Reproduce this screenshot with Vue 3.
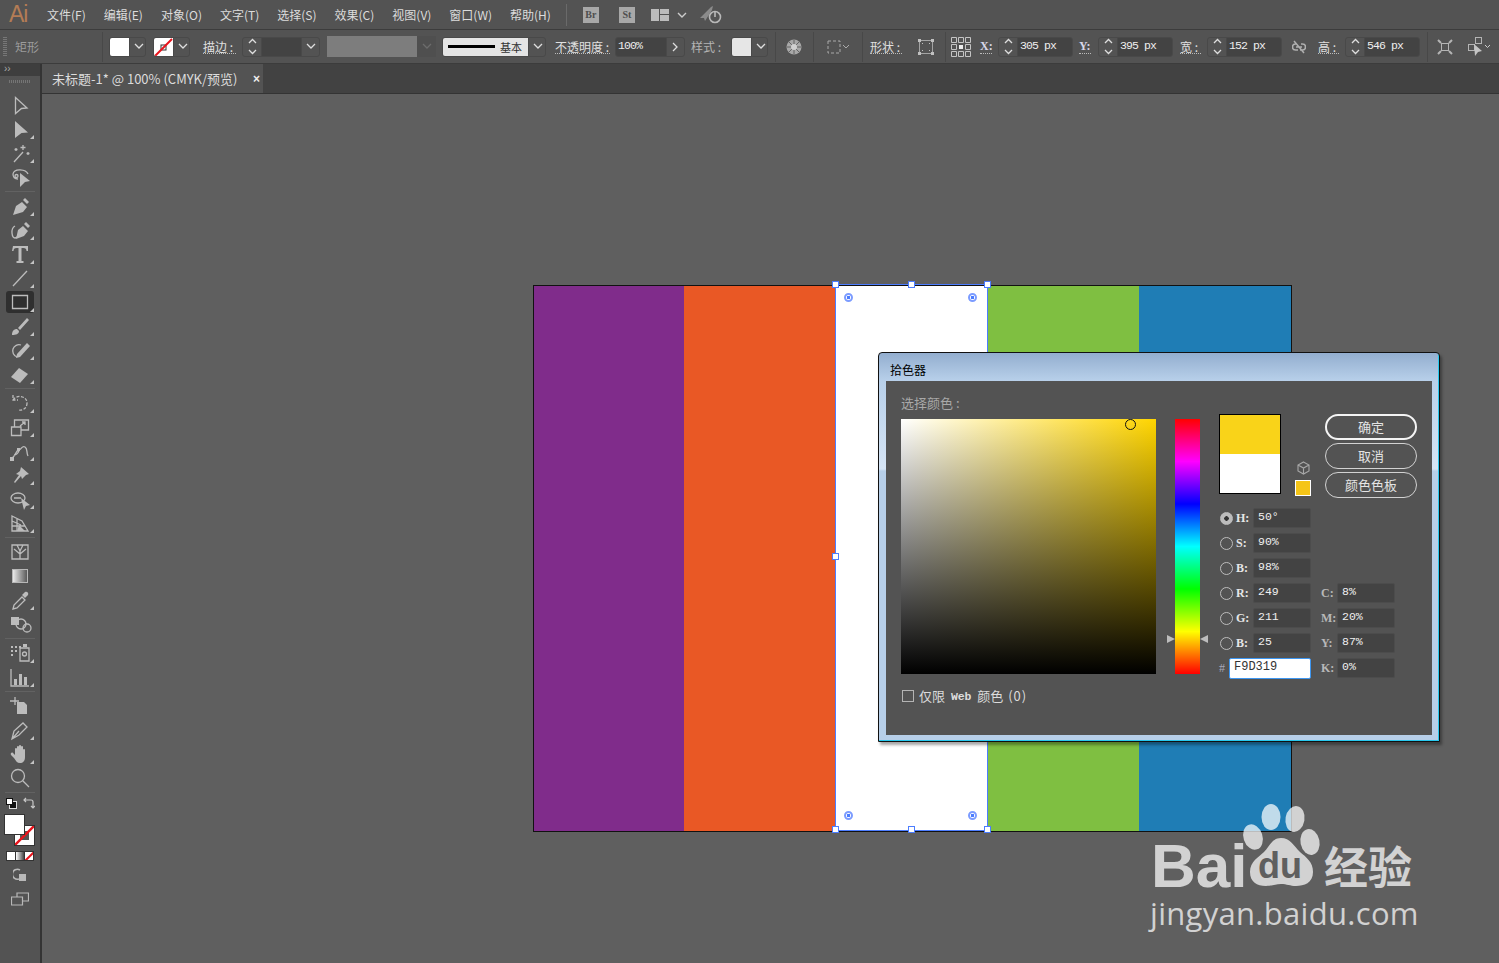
<script setup>
const menus = ['文件(F)', '编辑(E)', '对象(O)', '文字(T)', '选择(S)', '效果(C)', '视图(V)', '窗口(W)', '帮助(H)']

const pen = 'M5 21 L8 12 L14 8 L19 13 L15 18 Z M15 6 L17 4 L21 8 L19 10 Z'

// tools, one list per separated block
const toolGroups = [
  [
    { s: 'M7.5 4.5 L19 15 L13.5 15.5 L7.5 20.5 Z' },
    { f: 'M7 4 L20 15.5 L13.5 16 L7 21 Z', more: true },
    { s: 'M6 21 L15 11 M15 4v5 M12.5 6.5h5 M8 7v3 M6.5 8.5h3 M20 11v3 M18.5 12.5h3', more: true },
    { s: 'M20 9c-2-5-14-6-15 0 0 3 2 5 5 5 M7 11a1.5 1.5 0 1 0 3 0a1.5 1.5 0 1 0-3 0', f: 'M12 8 L22 16 L17 17 L12 22 Z' }
  ],
  [
    { f: pen, more: true },
    { f: 'M8 21 L10 12 L15 8 L20 13 L16 18 Z M16 6 L18 4 L22 8 L20 10 Z', s: 'M7 8c-5 3-3 12 0 12 2 0 2-2 4-2', more: true },
    { f: 'M5 4 h15 v5 h-1.5 c0-2-1-3-3-3 h-2 v13 h2 v2 h-7 v-2 h2 v-13 h-2 c-2 0-3 1-3 3 h-1.5 z', more: true },
    { s: 'M5 20 L19 5', more: true },
    { s: 'M4.5 5.5 h15 v13 h-15z', more: true, active: true },
    { f: 'M4 21 c0-4 2-6 5-6 l2 2 c0 3-3 4-7 4z M10 14 L19 4 l2 2 L12 16z', more: true },
    { s: 'M13 7a6 6 0 1 0-4 12', f: 'M9 16 L19 5 l3 3 L12 19 l-4 1z', more: true },
    { f: 'M3 15 L11 6 L20 12 L12 21 Z', more: true }
  ],
  [
    { s: 'M5 4v5h5 M5 9C9 3 19 5 19 12 M19 12c0 5-4 8-9 7', dash: true, more: true },
    { s: 'M3.5 12h9.5v8.5H3.5z M6.5 12V5h14v10h-8 M12 11 l5-4 M14 7h3v3', more: true },
    { s: 'M4 19 c4-2 3-7 7-8 3-1 3-5 6-3 3 2 1 5 3 9 M11 11c0 3-3 5-5 5', f: 'M2 18h4v4H2z M9 9h3v3H9z', more: true },
    { f: 'M13 4 L21 11 L18 12 L14 16 L13 13 L7 20 L6 19 L11 12 L8 11 L12 8z', more: true },
    { s: 'M3 11 a7 5 0 1 1 14 0 a7 5 0 1 1-14 0 M6 11h7', f: 'M13 11 L22 18 L18 19 L16 23 Z', more: true },
    { s: 'M4 5 L14 10 L20 20 H4Z M4 10 L13 14 M4 15 H17 M9 7 V20', f: 'M11 14 L17 20 H9 Z', more: true }
  ],
  [
    { s: 'M4 5h16v14H4z M12 19V11 M12 14L6 9 M12 14l6-5 M12 11 L9 5 M12 11 l3-6' },
    { grad: true },
    { s: 'M5 21 l1-4 L14 9 l3 3 L9 20z', f: 'M14 7 l3-3 c2-1 4 1 3 3 l-3 3z', more: true },
    { f: 'M3 5h8v8H3z', s: 'M8 12a5 5 0 1 0 10 0a5 5 0 1 0-10 0 M15 16a4 4 0 1 0 8 0a4 4 0 1 0-8 0' }
  ],
  [
    { f: 'M3 5h2v2H3z M7 5h2v2H7z M11 5h2v2h-2z M3 9h2v2H3z M7 9h2v2H7z M3 13h2v2H3z M15 3h4v3h-4z', s: 'M12 7h9v13h-9z M14.5 13a2 2 0 1 0 4 0a2 2 0 1 0-4 0', more: true },
    { s: 'M3 4 v17 h18', f: 'M6 14h3v6H6z M11 9h3v11h-3z M16 12h3v8h-3z', more: true }
  ],
  [
    { s: 'M7 3v8 M2 7h9', f: 'M9 8 h7 l3 3 v9 H9z' },
    { s: 'M4 21 L6 13 L15 5 L19 9 L11 17 Z M4 21 L11 13', more: true },
    { f: 'M7 13 V7 a1 1 0 0 1 2 0 V5a1 1 0 0 1 2 0 V4a1 1 0 0 1 2 0 V5 a1 1 0 0 1 2 0 V8a1 1 0 0 1 2 0V15 c0 4-2 6-5 6 c-3 0-4-2-6-5 l-3-3 c-1-2 1-3 2-2z', more: true },
    { s: 'M3.5 10a6.5 6.5 0 1 0 13 0a6.5 6.5 0 1 0-13 0 M15 15l6 6' }
  ]
]

const colorRows = [
  { lab: 'H:', val: '50°', on: true },
  { lab: 'S:', val: '90%' },
  { lab: 'B:', val: '98%' },
  { lab: 'R:', val: '249', cLab: 'C:', cVal: '8%' },
  { lab: 'G:', val: '211', cLab: 'M:', cVal: '20%' },
  { lab: 'B:', val: '25', cLab: 'Y:', cVal: '87%' },
  { hex: 'F9D319', cLab: 'K:', cVal: '0%' }
]

const stripes = [
  { c: '#802c8b', w: 150 },
  { c: '#e95825', w: 152 },
  { c: '#ffffff', w: 151 },
  { c: '#7fbf41', w: 152 },
  { c: '#1f7db5', w: 152 }
]
const handles = [[0, 0], [76, 0], [152, 0], [0, 272], [0, 545], [76, 545], [152, 545]]
const widgets = [[13, 13], [137, 13], [13, 531], [137, 531]]
</script>

<template>
  <div class="app">
    <header class="menubar">
      <span class="logo">Ai</span>
      <nav class="menus">
        <span v-for="m in menus" :key="m">{{ m }}</span>
      </nav>
      <i class="sep ml15"></i>
      <span class="badge ml16">Br</span>
      <span class="badge ml20">St</span>
      <svg class="ml16" width="18" height="14" viewBox="0 0 18 14"><path fill="#bcbcbc" d="M0 1h8v12H0z M9 1h9v5H9z M9 7h9v6H9z" /></svg>
      <svg class="ml8" width="10" height="8" viewBox="0 0 10 8"><path d="M1 2l4 4 4-4" fill="none" stroke="#ccc" stroke-width="1.4" /></svg>
      <svg class="ml12" width="24" height="20" viewBox="0 0 24 20">
        <path fill="#8b8b8b" d="M1 13 L12 2 L14 1 L13 5 L6 16 L5 13z" />
        <circle cx="16" cy="12" r="5.5" fill="none" stroke="#b8b8b8" stroke-width="1.6" />
        <path d="M16 6v6" stroke="#b8b8b8" stroke-width="1.6" />
      </svg>
    </header>

    <section class="controlbar">
      <i class="grip ml3"></i>
      <span class="kind ml8">矩形</span>
      <i class="sep2"></i>
      <div class="combo swatchbox ml6"><span class="swatch"></span><span class="drop"><svg width="10" height="7" viewBox="0 0 10 7"><path d="M1 1l4 4 4-4" /></svg></span></div>
      <div class="combo swatchbox ml7">
        <span class="swatch nofill"><svg width="19" height="19" viewBox="0 0 19 19"><rect x="7" y="7" width="5" height="5" fill="none" stroke="#333" /><path d="M1 18L18 1" stroke="#e8141c" stroke-width="2" /></svg></span>
        <span class="drop"><svg width="10" height="7" viewBox="0 0 10 7"><path d="M1 1l4 4 4-4" /></svg></span>
      </div>
      <span class="lbl w33 ml13">描边 :</span>
      <div class="combo w78 ml6">
        <span class="stepper"><svg width="9" height="17" viewBox="0 0 9 17"><path d="M1 5l3.5-3.5L8 5 M1 12l3.5 3.5L8 12" /></svg></span>
        <span class="fieldfill"></span>
        <span class="drop"><svg width="10" height="7" viewBox="0 0 10 7"><path d="M1 1l4 4 4-4" /></svg></span>
      </div>
      <div class="greybox ml7"><span class="greyfill"></span><span class="greydrop"><svg width="10" height="7" viewBox="0 0 10 7"><path d="M1 1l4 4 4-4" /></svg></span></div>
      <div class="combo w104 ml6">
        <span class="strokebox"><i class="strokeline"></i><b>基本</b></span>
        <span class="drop"><svg width="10" height="7" viewBox="0 0 10 7"><path d="M1 1l4 4 4-4" /></svg></span>
      </div>
      <span class="lbl w55 ml9">不透明度 :</span>
      <div class="combo w70 ml5">
        <span class="fieldfill val">100%</span>
        <span class="drop"><svg width="7" height="10" viewBox="0 0 7 10"><path d="M1 1l4 4-4 4" /></svg></span>
      </div>
      <span class="lbl plain w32 ml6">样式 :</span>
      <div class="combo swatchbox ml8"><span class="swatch soft"></span><span class="drop"><svg width="10" height="7" viewBox="0 0 10 7"><path d="M1 1l4 4 4-4" /></svg></span></div>
      <i class="sep2 ml7"></i>
      <svg class="ml10" width="16" height="16" viewBox="0 0 16 16">
        <circle cx="8" cy="8" r="7.5" fill="#a8a8a8" />
        <path d="M8 1v14 M1 8h14 M3 3l10 10 M13 3L3 13" stroke="#5c5c5c" stroke-width=".9" />
        <circle cx="8" cy="8" r="3" fill="#d0d0d0" />
      </svg>
      <i class="sep2 ml11"></i>
      <svg class="ml12" width="24" height="16" viewBox="0 0 24 16">
        <rect x="2" y="2" width="12" height="12" fill="none" stroke="#aaa" stroke-dasharray="3 2" />
        <path d="M17 6l3 3 3-3" fill="none" stroke="#aaa" />
      </svg>
      <i class="sep2 ml12"></i>
      <span class="lbl w32 ml7">形状 :</span>
      <svg class="ml16" width="16" height="16" viewBox="0 0 16 16">
        <rect x="1.500" y="1.500" width="13" height="13" fill="none" stroke="#a4a4a4" />
        <path fill="#c0c0c0" d="M0 0h3v3H0z M13 0h3v3h-3z M0 13h3v3H0z M13 13h3v3h-3z M4 4h1v1H4z M11 4h1v1h-1z M4 11h1v1H4z M11 11h1v1h-1z" />
      </svg>
      <i class="sep2 ml11"></i>
      <svg class="ml5" width="20" height="20" viewBox="0 0 20 20" fill="none" stroke="#c4c4c4">
        <path d="M.5.5h5v5h-5z M7.5.5h5v5h-5z M14.5.5h5v5h-5z M.5 7.5h5v5h-5z M14.5 7.5h5v5h-5z M.5 14.5h5v5h-5z M7.5 14.5h5v5h-5z M14.5 14.5h5v5h-5z" />
        <path d="M8 8h4v4H8z" fill="#eee" stroke="none" />
      </svg>
      <span class="lbl serif w12 ml9">X:</span>
      <div class="combo w75 ml6">
        <span class="stepper"><svg width="9" height="17" viewBox="0 0 9 17"><path d="M1 5l3.5-3.5L8 5 M1 12l3.5 3.5L8 12" /></svg></span>
        <span class="fieldfill mono">305 px</span>
      </div>
      <span class="lbl serif w12 ml6">Y:</span>
      <div class="combo w75 ml7">
        <span class="stepper"><svg width="9" height="17" viewBox="0 0 9 17"><path d="M1 5l3.5-3.5L8 5 M1 12l3.5 3.5L8 12" /></svg></span>
        <span class="fieldfill mono">395 px</span>
      </div>
      <span class="lbl w21 ml7">宽 :</span>
      <div class="combo w75 ml6">
        <span class="stepper"><svg width="9" height="17" viewBox="0 0 9 17"><path d="M1 5l3.5-3.5L8 5 M1 12l3.5 3.5L8 12" /></svg></span>
        <span class="fieldfill mono">152 px</span>
      </div>
      <svg class="ml10" width="14" height="14" viewBox="0 0 14 14" fill="none" stroke="#b0b0b0" stroke-width="1.5">
        <path d="M5 4H3.500a3 3 0 0 0 0 6H6 M9 4h1.500a3 3 0 0 1 0 6H8 M4 7h6 M2 1l10 12" />
      </svg>
      <span class="lbl w21 ml12">高 :</span>
      <div class="combo w75 ml6">
        <span class="stepper"><svg width="9" height="17" viewBox="0 0 9 17"><path d="M1 5l3.5-3.5L8 5 M1 12l3.5 3.5L8 12" /></svg></span>
        <span class="fieldfill mono">546 px</span>
      </div>
      <i class="sep2 ml7"></i>
      <svg class="ml9" width="16" height="20" viewBox="0 0 16 20" fill="none" stroke="#b4b4b4">
        <rect x="4.500" y="6.500" width="7" height="7" />
        <path d="M1 3l3 3 M15 3l-3 3 M1 17l3-3 M15 17l-3-3" stroke-width="2" />
      </svg>
      <svg class="ml15" width="22" height="20" viewBox="0 0 22 20">
        <rect x=".5" y="7.500" width="6" height="6" fill="none" stroke="#b4b4b4" />
        <rect x="7.500" y=".5" width="6" height="6" fill="none" stroke="#b4b4b4" />
        <path d="M6 7 L14 14 L10 15 L7 19 Z" fill="#c4c4c4" />
        <path d="M17 8l2.500 2.500L22 8" fill="none" stroke="#ccc" />
      </svg>
    </section>

    <div class="body">
      <aside class="toolbar">
        <div class="panelhead">››</div>
        <i class="toolgrip"></i>
        <div class="toolgroups">
          <div v-for="(group, g) in toolGroups" :key="g" class="toolgroup">
            <div v-for="(t, i) in group" :key="i" class="tool" :class="{ active: t.active }">
              <svg width="24" height="24" viewBox="0 0 24 24">
                <defs v-if="t.grad">
                  <linearGradient id="toolgrad"><stop offset="0" stop-color="#eee" /><stop offset="1" stop-color="#555" /></linearGradient>
                </defs>
                <rect v-if="t.grad" x="4.500" y="5.500" width="15" height="13" fill="url(#toolgrad)" stroke="#b8b8b8" />
                <path v-if="t.f" :d="t.f" fill="#bcbcbc" />
                <path v-if="t.s" :d="t.s" fill="none" stroke="#bcbcbc" stroke-width="1.300" :stroke-dasharray="t.dash ? '3 1.500' : null" />
              </svg>
              <i v-if="t.more" class="more"></i>
            </div>
          </div>
        </div>

        <div class="defaults">
          <span class="mini"><i class="mini-back"></i><i class="mini-front"></i></span>
          <svg width="12" height="12" viewBox="0 0 12 12" fill="none" stroke="#c8c8c8" stroke-width="1.200">
            <path d="M1 3h7a2 2 0 0 1 2 2v6 M3 1L1 3l2 2 M8 9l2 2 2-2" />
          </svg>
        </div>
        <div class="fillstroke">
          <span class="strokewell">
            <svg width="19" height="19" viewBox="0 0 19 19"><rect x="5" y="5" width="9" height="9" fill="#555" /><path d="M0 19L19 0" stroke="#e8141c" stroke-width="2.400" /></svg>
          </span>
          <span class="fillwell"></span>
        </div>
        <div class="modes">
          <i class="mode m-white"></i><i class="mode m-grad"></i>
          <i class="mode m-none"><svg width="9" height="9" viewBox="0 0 9 9"><path d="M0 9L9 0" stroke="#e8141c" stroke-width="2" /></svg></i>
        </div>
        <svg class="drawmode" width="14" height="14" viewBox="0 0 14 14">
          <path d="M7 2a5 5 0 1 0-1 9" fill="none" stroke="#b8b8b8" stroke-width="1.500" />
          <rect x="6" y="6" width="7" height="7" fill="#b8b8b8" />
        </svg>
        <svg class="screenmode" width="18" height="14" viewBox="0 0 18 14" fill="none" stroke="#b8b8b8" stroke-width="1.200">
          <path d="M.5 5h11v8H.5z M6 5V1h11.500v8h-6" />
        </svg>
      </aside>

      <main class="main">
        <div class="tabbar">
          <div class="tab"><span>未标题-1* @ 100% (CMYK/预览)</span><b>×</b></div>
        </div>
        <div class="workspace">
          <div class="artboard">
            <div v-for="s in stripes" :key="s.c" :style="{ background: s.c, width: s.w + 'px' }"></div>
          </div>
          <div class="selection">
            <i v-for="(h, i) in handles" :key="'h' + i" class="handle" :style="{ left: h[0] + 'px', top: h[1] + 'px' }"></i>
            <i v-for="(w, i) in widgets" :key="'w' + i" class="widget" :style="{ left: w[0] + 'px', top: w[1] + 'px' }"></i>
          </div>

          <div class="dialog">
            <div class="dialog-title">拾色器</div>
            <div class="dialog-body">
              <div class="col-sv">
                <div class="pick-label">选择颜色 :</div>
                <div class="sv"><i class="sv-cursor"></i></div>
                <label class="webonly"><i class="checkbox"></i><span>仅限</span><b>Web</b><span>颜色</span><span class="count">(0)</span></label>
              </div>
              <div class="hue"><i class="hue-l"></i><i class="hue-r"></i></div>
              <div class="col-right">
                <div class="top-row">
                  <div class="preview"><i class="pv-new"></i><i class="pv-old"></i></div>
                  <div class="gamut">
                    <svg width="13" height="14" viewBox="0 0 13 14" fill="none" stroke="#a8a8a8" stroke-width="1.100">
                      <path d="M6.500 1L12 4v6l-5.500 3L1 10V4z M1 4l5.500 3L12 4 M6.500 7v6" />
                    </svg>
                    <i class="gamut-swatch"></i>
                  </div>
                  <div class="buttons">
                    <button class="primary">确定</button>
                    <button>取消</button>
                    <button>颜色色板</button>
                  </div>
                </div>
                <div v-for="(r, i) in colorRows" :key="i" class="color-row">
                  <div class="cell-left">
                    <template v-if="r.hex">
                      <span class="hash">#</span>
                      <span class="hexinput">{{ r.hex }}</span>
                    </template>
                    <template v-else>
                      <i class="radio" :class="{ on: r.on }"></i>
                      <span class="chan">{{ r.lab }}</span>
                      <span class="num">{{ r.val }}</span>
                    </template>
                  </div>
                  <div v-if="r.cLab" class="cell-right">
                    <span class="chan dim">{{ r.cLab }}</span>
                    <span class="num">{{ r.cVal }}</span>
                  </div>
                </div>
              </div>
            </div>
          </div>

          <div class="watermark">
            <svg width="270" height="97" viewBox="0 0 270 97">
              <g fill="#fff" fill-opacity=".72">
                <ellipse cx="103" cy="34" rx="9.500" ry="13" transform="rotate(-18 103 34)" />
                <ellipse cx="121" cy="14" rx="9.500" ry="13" />
                <ellipse cx="145" cy="16" rx="9.500" ry="13" transform="rotate(10 145 16)" />
                <ellipse cx="160" cy="39" rx="9.500" ry="13" transform="rotate(-12 160 39)" />
                <path d="M131 35c9 0 13 8 19 14 6 5 13 10 13 20 0 11-9 14-17 14-6 0-9-2-15-2s-9 2-15 2c-9 0-16-4-16-14 0-11 9-15 14-20 6-6 8-14 17-14z" />
              </g>
              <text x="1" y="84" class="wm-bai">Bai</text>
              <text x="108" y="75" class="wm-du">du</text>
              <text x="174" y="81" class="wm-cn">经验</text>
            </svg>
            <div class="wm-url">jingyan.baidu.com</div>
          </div>
        </div>
      </main>
    </div>
  </div>
</template>

<style>
html, body {
  margin: 0;
  background: #5f5f5f;
  overflow: hidden;
}
</style>

<style scoped>
.app {
  width: 1499px;
  height: 963px;
  display: flex;
  flex-direction: column;
  overflow: hidden;
  background: #5f5f5f;
  font-family: "Noto Sans CJK SC", "Liberation Sans", sans-serif;
  font-size: 12px;
  color: #dcdcdc;
}

.ml3 { margin-left: 3px; }
.ml5 { margin-left: 5px; }
.ml6 { margin-left: 6px; }
.ml7 { margin-left: 7px; }
.ml8 { margin-left: 8px; }
.ml9 { margin-left: 9px; }
.ml10 { margin-left: 10px; }
.ml11 { margin-left: 11px; }
.ml12 { margin-left: 12px; }
.ml13 { margin-left: 13px; }
.ml15 { margin-left: 15px; }
.ml16 { margin-left: 16px; }
.ml20 { margin-left: 20px; }

/* menu */
.menubar {
  height: 30px;
  display: flex;
  align-items: center;
  background: #535353;
  border-bottom: 1px solid #3c3c3c;
  box-sizing: border-box;
  flex-shrink: 0;
}
.logo {
  width: 47px;
  padding-left: 9px;
  box-sizing: border-box;
  font: 23px "Liberation Sans", sans-serif;
  letter-spacing: -1px;
  color: #b37c55;
}
.menus {
  display: flex;
  gap: 18px;
  line-height: 30px;
  white-space: nowrap;
}
.sep {
  width: 1px;
  height: 22px;
  background: #6a6a6a;
}
.badge {
  width: 16px;
  height: 16px;
  background: #a8a8a8;
  color: #4e4e4e;
  font: bold 10px/16px "Liberation Serif", serif;
  text-align: center;
}

/* control bar */
.controlbar {
  height: 34px;
  display: flex;
  align-items: center;
  background: #535353;
  border-bottom: 1px solid #3c3c3c;
  box-sizing: border-box;
  flex-shrink: 0;
  white-space: nowrap;
}
.grip {
  width: 4px;
  height: 19px;
  background: repeating-linear-gradient(#777 0 1px, transparent 1px 2px);
}
.kind {
  width: 87px;
  color: #9c9c9c;
}
.sep2 {
  width: 1px;
  height: 30px;
  background: #484848;
}
.combo {
  display: flex;
  height: 20px;
  border: 1px solid #494949;
  border-radius: 3px;
  box-sizing: border-box;
  overflow: hidden;
  flex-shrink: 0;
}
.swatchbox { width: 37px; }
.w78 { width: 78px; }
.w104 { width: 104px; }
.w70 { width: 70px; }
.w75 { width: 75px; }
.w33 { width: 33px; }
.w55 { width: 55px; }
.w32 { width: 32px; }
.w12 { width: 12px; }
.w21 { width: 21px; }
.swatch {
  width: 19px;
  background: #fff;
  flex-shrink: 0;
}
.swatch.soft { background: #e6e6e6; }
.swatch svg { display: block; }
.drop {
  flex: 0 0 17px;
  display: flex;
  align-items: center;
  justify-content: center;
  border-left: 1px solid #494949;
}
.drop svg, .greydrop svg, .stepper svg {
  fill: none;
  stroke: #dedede;
  stroke-width: 1.300;
}
.lbl {
  font-size: 12px;
  line-height: 13px;
  border-bottom: 1px dotted #bbb;
  color: #e0e0e0;
  flex-shrink: 0;
}
.lbl.plain {
  border-bottom: 0;
  color: #b4b4b4;
}
.lbl.serif {
  font: bold 12px/13px "Liberation Serif", serif;
  color: #d8d8e8;
}
.stepper {
  width: 18px;
  flex-shrink: 0;
  display: flex;
  align-items: center;
  justify-content: center;
  border-right: 1px solid #494949;
}
.fieldfill {
  flex: 1;
  background: #434343;
  padding-left: 2px;
  color: #eee;
  line-height: 16px;
}
.fieldfill.val, .fieldfill.mono {
  font: 11.500px/16px "Liberation Mono", monospace;
  letter-spacing: -.9px;
}
.greybox {
  display: flex;
  height: 21px;
  width: 109px;
  flex-shrink: 0;
}
.greyfill {
  width: 90px;
  background: #7d7d7d;
}
.greydrop {
  flex: 1;
  background: #4f4f4f;
  display: flex;
  align-items: center;
  justify-content: center;
}
.greydrop svg { stroke: #6c6c6c; }
.strokebox {
  width: 85px;
  background: #e4e4e4;
  display: flex;
  align-items: center;
  flex-shrink: 0;
  color: #333;
}
.strokebox b {
  font-weight: 400;
  font-size: 11px;
  margin-left: 5px;
}
.strokeline {
  margin-left: 5px;
  width: 47px;
  height: 3px;
  background: #000;
}

/* body */
.body {
  flex: 1;
  display: flex;
  min-height: 0;
}
.toolbar {
  width: 42px;
  box-sizing: border-box;
  flex-shrink: 0;
  background: #535353;
  border-right: 2px solid #343434;
  display: flex;
  flex-direction: column;
  align-items: center;
}
.panelhead {
  align-self: stretch;
  height: 12px;
  background: #3e3e3e;
  font: 10px/10px "Liberation Sans", sans-serif;
  padding-left: 4px;
  color: #aaa;
}
.toolgrip {
  width: 22px;
  height: 3px;
  margin-top: 4px;
  background: repeating-linear-gradient(90deg, #757575 0 1px, transparent 1px 2px);
}
.toolgroups {
  align-self: stretch;
  margin-top: 10px;
}
.toolgroup {
  border-bottom: 1px solid #626262;
  padding-bottom: 2px;
  margin: 0 5px 2px;
}
.tool {
  position: relative;
  height: 24px;
  margin: 0 -5px;
  display: flex;
  align-items: center;
  justify-content: center;
}
.tool svg { display: block; }
.tool.active::before {
  content: "";
  position: absolute;
  left: 6px;
  width: 28px;
  top: 1px;
  bottom: 1px;
  border-radius: 3px;
  background: #2f2f2f;
}
.tool.active svg { position: relative; }
.more {
  position: absolute;
  right: 6px;
  bottom: 2px;
  width: 0;
  height: 0;
  border-left: 4px solid transparent;
  border-bottom: 4px solid #c4c4c4;
}
.defaults {
  align-self: stretch;
  display: flex;
  align-items: center;
  justify-content: space-between;
  padding: 2px 5px 0 6px;
  height: 12px;
}
.mini {
  position: relative;
  width: 11px;
  height: 11px;
}
.mini-back {
  position: absolute;
  right: 0;
  bottom: 0;
  width: 6px;
  height: 6px;
  background: #111;
  border: 1px solid #ddd;
}
.mini-front {
  position: absolute;
  left: 0;
  top: 0;
  width: 5px;
  height: 5px;
  background: #fff;
  border: 1px solid #111;
}
.fillstroke {
  position: relative;
  align-self: stretch;
  height: 31px;
  margin-top: 6px;
}
.fillwell {
  position: absolute;
  left: 5px;
  top: 0;
  width: 19px;
  height: 19px;
  background: #fff;
  outline: 1px solid #333;
}
.strokewell {
  position: absolute;
  left: 15px;
  top: 11px;
  width: 19px;
  height: 19px;
  background: #fff;
  outline: 1px solid #333;
}
.strokewell svg { display: block; }
.modes {
  display: flex;
  margin-top: 5px;
  width: 28px;
  height: 10px;
  border: 1px solid #333;
  box-sizing: border-box;
  gap: 1px;
  background: #333;
}
.mode {
  flex: 1;
  overflow: hidden;
}
.mode svg { display: block; }
.m-white { background: #fff; }
.m-grad { background: linear-gradient(90deg, #fff, #444); }
.m-none { background: #fff; }
.drawmode {
  margin-top: 7px;
}
.screenmode {
  margin-top: 10px;
}

.main {
  flex: 1;
  display: flex;
  flex-direction: column;
  min-width: 0;
}
.tabbar {
  height: 30px;
  background: #424242;
  border-bottom: 1px solid #343434;
  box-sizing: border-box;
  flex-shrink: 0;
}
.tab {
  width: 221px;
  height: 29px;
  box-sizing: border-box;
  background: #535353;
  padding-left: 10px;
  display: flex;
  align-items: center;
  justify-content: space-between;
  font-size: 13px;
  color: #dcdcdc;
  white-space: nowrap;
}
.tab b {
  margin-right: 3px;
  font: bold 12px "Liberation Sans", sans-serif;
  color: #eee;
}

/* canvas */
.workspace {
  position: relative;
  flex: 1;
  background: #5f5f5f;
}
.artboard {
  position: absolute;
  left: 491px;
  top: 191px;
  width: 759px;
  height: 547px;
  box-sizing: border-box;
  border: 1px solid #111;
  display: flex;
}
.selection {
  position: absolute;
  left: 793px;
  top: 190px;
  width: 153px;
  height: 547px;
  box-sizing: border-box;
  border: 1px solid #4c7dff;
}
.handle {
  position: absolute;
  width: 7px;
  height: 7px;
  margin: -4px 0 0 -4px;
  box-sizing: border-box;
  background: #fff;
  border: 1px solid #4c7dff;
}
.widget {
  position: absolute;
  width: 9px;
  height: 9px;
  margin: -5px 0 0 -5px;
  box-sizing: border-box;
  border: 2px solid #7c9cff;
  border-radius: 50%;
  background: radial-gradient(#4c7dff 0 1.500px, #fff 2px);
}

/* dialog */
.dialog {
  position: absolute;
  left: 836px;
  top: 258px;
  width: 562px;
  height: 390px;
  box-sizing: border-box;
  border: 1px solid #111;
  border-radius: 4px 4px 0 0;
  padding: 0 7px 6px 7px;
  display: flex;
  flex-direction: column;
  background: linear-gradient(#93aecf 0, #b8d0ea 28px, #d6e5f5 116px, #b7cfe9 118px);
  box-shadow: inset -1px -1px 0 #28c8ee, 2px 3px 3px rgba(0, 0, 0, .35);
}
.dialog-title {
  height: 28px;
  padding-left: 4px;
  line-height: 33px;
  color: #000;
  flex-shrink: 0;
}
.dialog-body {
  flex: 1;
  background: #535353;
  display: flex;
  align-items: flex-start;
  padding-left: 15px;
}
.col-sv { width: 255px; flex-shrink: 0; }
.pick-label {
  padding-top: 14px;
  line-height: 16px;
  height: 38px;
  box-sizing: border-box;
  font-size: 13px;
  color: #a8a8a8;
}
.sv {
  position: relative;
  height: 255px;
  background:
    linear-gradient(to top, #000, rgba(0, 0, 0, 0)),
    linear-gradient(to right, #fff, #ffd500);
}
.sv-cursor {
  position: absolute;
  left: 224px;
  top: 0;
  width: 11px;
  height: 11px;
  box-sizing: border-box;
  border: 1.500px solid #111;
  border-radius: 50%;
}
.webonly {
  display: flex;
  align-items: center;
  gap: 6px;
  margin-top: 15px;
  line-height: 14px;
  font-size: 13px;
  color: #dcdcdc;
}
.webonly b {
  font: bold 11.500px "Liberation Mono", monospace;
  letter-spacing: -.2px;
}
.webonly .count {
  margin-left: -1px;
  letter-spacing: 1px;
}
.checkbox {
  width: 12px;
  height: 12px;
  margin: 0 -1px 0 1px;
  box-sizing: border-box;
  border: 1px solid #b4b4b4;
}
.hue {
  position: relative;
  width: 25px;
  height: 255px;
  margin: 38px 0 0 19px;
  flex-shrink: 0;
  background: linear-gradient(#f00, #f0f 16.660%, #00f 33.330%, #0ff 50%, #0f0 66.660%, #ff0 83.330%, #f00);
}
.hue-l, .hue-r {
  position: absolute;
  top: 216px;
  width: 0;
  height: 0;
  border-top: 4px solid transparent;
  border-bottom: 4px solid transparent;
}
.hue-l {
  left: -8px;
  border-left: 8px solid #bdbdbd;
}
.hue-r {
  right: -8px;
  border-right: 8px solid #bdbdbd;
}
.col-right {
  margin: 33px 0 0 19px;
  width: 198px;
  flex-shrink: 0;
}
.top-row {
  display: flex;
  align-items: flex-start;
  height: 94px;
}
.preview {
  width: 62px;
  height: 80px;
  box-sizing: border-box;
  border: 1px solid #000;
  display: flex;
  flex-direction: column;
  flex-shrink: 0;
}
.pv-new { height: 39px; background: #f9d319; }
.pv-old { flex: 1; background: #fff; }
.gamut {
  width: 16px;
  margin-left: 14px;
  padding-top: 47px;
  display: flex;
  flex-direction: column;
  align-items: center;
  gap: 5px;
  flex-shrink: 0;
}
.gamut svg { display: block; }
.gamut-swatch {
  width: 16px;
  height: 16px;
  box-sizing: border-box;
  background: #f5c518;
  border: 1px solid #fff;
}
.buttons {
  margin-left: 14px;
  width: 92px;
  display: flex;
  flex-direction: column;
  gap: 3px;
  flex-shrink: 0;
}
.buttons button {
  height: 26px;
  padding: 0 0 2px;
  box-sizing: border-box;
  background: transparent;
  border: 1px solid #d2d2d2;
  border-radius: 13px;
  font: 13px "Noto Sans CJK SC", sans-serif;
  color: #e4e4e4;
}
.buttons .primary {
  border: 2px solid #f4f4f4;
}
.color-row {
  height: 20px;
  margin-bottom: 5px;
  display: flex;
  align-items: center;
  position: relative;
}
.cell-left {
  width: 92px;
  display: flex;
  align-items: center;
  flex-shrink: 0;
}
.cell-right {
  display: flex;
  align-items: center;
  margin-left: 10px;
}
.radio {
  width: 13px;
  height: 13px;
  margin-left: 1px;
  box-sizing: border-box;
  border: 1px solid #bcbcbc;
  border-radius: 50%;
  flex-shrink: 0;
}
.radio.on {
  background: radial-gradient(#333 0 2px, #bcbcbc 2.500px);
}
.chan {
  width: 20px;
  padding-left: 3px;
  box-sizing: border-box;
  font: bold 12px "Liberation Serif", serif;
  color: #e6e6e6;
  flex-shrink: 0;
}
.chan.dim {
  width: 16px;
  padding-left: 0;
  color: #b8b8b8;
}
.num {
  width: 58px;
  height: 20px;
  box-sizing: border-box;
  background: #434343;
  border: 1px solid #4c4c4c;
  border-radius: 2px;
  padding-left: 4px;
  font: 11.500px/16px "Liberation Mono", monospace;
  color: #f0f0f0;
}
.hash {
  width: 10px;
  color: #a8a8b8;
  font: 12px "Liberation Serif", serif;
  flex-shrink: 0;
}
.hexinput {
  width: 82px;
  height: 21px;
  box-sizing: border-box;
  background: #fff;
  border: 1px solid #3e96f0;
  border-radius: 2px;
  padding-left: 4px;
  font: 12px/17px "Liberation Mono", monospace;
  color: #333;
  flex-shrink: 0;
}

/* watermark */
.watermark {
  position: absolute;
  left: 1108px;
  top: 709px;
  width: 280px;
}
.watermark svg { display: block; }
.wm-bai {
  font: bold 62px "Liberation Sans", sans-serif;
  fill: #fff;
  fill-opacity: .72;
}
.wm-du {
  font: bold 36px "Liberation Sans", sans-serif;
  fill: #5f5f5f;
}
.wm-cn {
  font: bold 44px "Noto Sans CJK SC", sans-serif;
  fill: #fff;
  fill-opacity: .72;
}
.wm-url {
  font: 31px/26px "Open Sans", sans-serif;
  letter-spacing: .3px;
  color: rgba(255, 255, 255, .72);
  white-space: nowrap;
}
</style>
